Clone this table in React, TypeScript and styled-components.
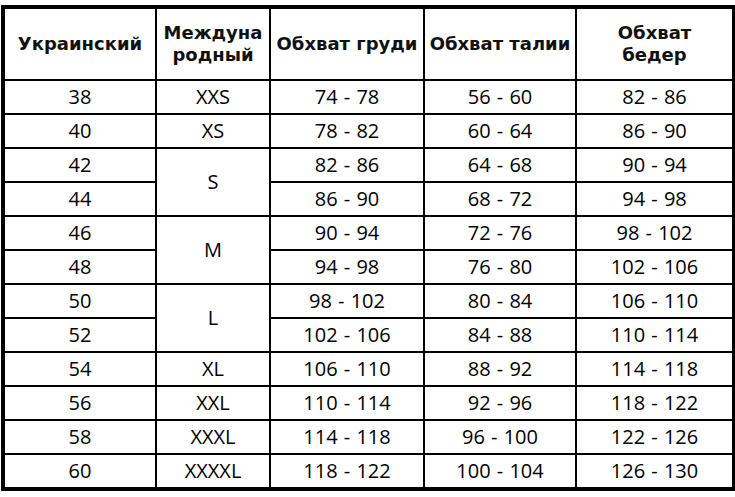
import styled, { createGlobalStyle } from "styled-components";

const GlobalStyle = createGlobalStyle`
  html, body {
    margin: 0;
    padding: 0;
    background: #fff;
  }
`;

const Page = styled.div`
  width: 735px;
  height: 497px;
  padding: 5px 3px 0 1px;
  box-sizing: border-box;
  background: #fff;
`;

const Table = styled.table`
  width: 731px;
  table-layout: fixed;
  border-collapse: collapse;
  border: 4px solid #000;
  font-family: "Open Sans", "DejaVu Sans", sans-serif;
  color: #000;
`;

const HeadCell = styled.th`
  height: 70px;
  padding: 0;
  border: 2px solid #000;
  font-family: "DejaVu Sans", Verdana, sans-serif;
  font-weight: bold;
  font-size: 18px;
  line-height: 22px;
  color: #111;
  text-align: center;
  vertical-align: middle;
  white-space: nowrap;
`;

const Cell = styled.td<{ $tall?: boolean }>`
  height: ${(p) => (p.$tall ? 66 : 32)}px;
  padding: 0;
  border: 2px solid #000;
  font-size: 20px;
  line-height: 24px;
  word-spacing: 1px;
  text-align: center;
  vertical-align: middle;
  white-space: nowrap;
`;

type Row = {
  ua: string;
  intl?: string;
  span?: number;
  chest: string;
  waist: string;
  hips: string;
};

const rows: Row[] = [
  { ua: "38", intl: "XXS", chest: "74 - 78", waist: "56 - 60", hips: "82 - 86" },
  { ua: "40", intl: "XS", chest: "78 - 82", waist: "60 - 64", hips: "86 - 90" },
  { ua: "42", intl: "S", span: 2, chest: "82 - 86", waist: "64 - 68", hips: "90 - 94" },
  { ua: "44", chest: "86 - 90", waist: "68 - 72", hips: "94 - 98" },
  { ua: "46", intl: "M", span: 2, chest: "90 - 94", waist: "72 - 76", hips: "98 - 102" },
  { ua: "48", chest: "94 - 98", waist: "76 - 80", hips: "102 - 106" },
  { ua: "50", intl: "L", span: 2, chest: "98 - 102", waist: "80 - 84", hips: "106 - 110" },
  { ua: "52", chest: "102 - 106", waist: "84 - 88", hips: "110 - 114" },
  { ua: "54", intl: "XL", chest: "106 - 110", waist: "88 - 92", hips: "114 - 118" },
  { ua: "56", intl: "XXL", chest: "110 - 114", waist: "92 - 96", hips: "118 - 122" },
  { ua: "58", intl: "XXXL", chest: "114 - 118", waist: "96 - 100", hips: "122 - 126" },
  { ua: "60", intl: "XXXXL", chest: "118 - 122", waist: "100 - 104", hips: "126 - 130" },
];

export default function App() {
  return (
    <Page>
      <GlobalStyle />
      <Table>
        <colgroup>
          <col style={{ width: 153 }} />
          <col style={{ width: 114 }} />
          <col style={{ width: 154 }} />
          <col style={{ width: 152 }} />
          <col style={{ width: 158 }} />
        </colgroup>
        <thead>
          <tr>
            <HeadCell>Украинский</HeadCell>
            <HeadCell>
              Междуна
              <br />
              родный
            </HeadCell>
            <HeadCell>Обхват груди</HeadCell>
            <HeadCell>Обхват талии</HeadCell>
            <HeadCell>
              Обхват
              <br />
              бедер
            </HeadCell>
          </tr>
        </thead>
        <tbody>
          {rows.map((r) => (
            <tr key={r.ua}>
              <Cell>{r.ua}</Cell>
              {r.intl && (
                <Cell rowSpan={r.span} $tall={r.span === 2}>
                  {r.intl}
                </Cell>
              )}
              <Cell>{r.chest}</Cell>
              <Cell>{r.waist}</Cell>
              <Cell>{r.hips}</Cell>
            </tr>
          ))}
        </tbody>
      </Table>
    </Page>
  );
}
